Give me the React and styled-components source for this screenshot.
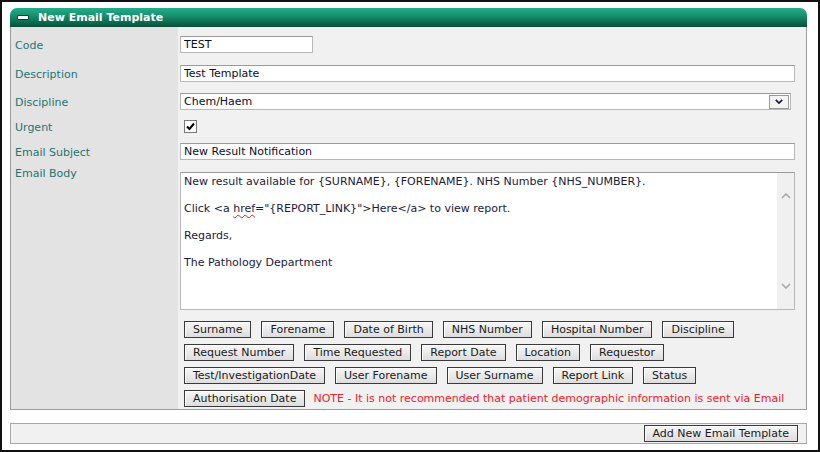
import React from 'react'
import styled, { createGlobalStyle } from 'styled-components'

const GlobalStyle = createGlobalStyle`
  html, body {
    margin: 0;
    padding: 0;
    background: #fff;
  }
  body {
    font-family: "DejaVu Sans", Verdana, sans-serif;
    font-size: 11px;
    color: #111;
  }
`

const Frame = styled.div`
  width: 820px;
  height: 452px;
  box-sizing: border-box;
  border: 2px solid #111;
  padding: 6px 11px 0 8px;
  background: #fff;
`

const Header = styled.div`
  height: 19px;
  display: flex;
  align-items: center;
  gap: 9px;
  padding-left: 7px;
  border-radius: 7px 7px 0 0;
  background: linear-gradient(to bottom, #25ad8a 0%, #179170 40%, #0d6a4e 75%, #0a4f39 100%);
  color: #fff;
  font-weight: bold;
  font-size: 11px;
`

const Minus = styled.span`
  width: 10px;
  height: 3px;
  background: #fff;
  border: 1px solid #0b3d2c;
  border-radius: 1px;
`

const Panel = styled.div`
  border: 1px solid #9c9c9c;
  border-top: none;
  background: #f1f1f1;
`

const Row = styled.div`
  display: grid;
  grid-template-columns: 167px 1fr;
`

const Label = styled.div`
  background: #e3e3e3;
  color: #237572;
  padding: ${(p) => p.$pt + 2}px 0 0 4px;
  line-height: ${(p) => (p.$lh || 17) - 2}px;
`

const Field = styled.div`
  padding: ${(p) => p.$pt}px 10px ${(p) => p.$pb || 0}px 2px;
  display: flex;
  flex-direction: column;
  align-items: flex-start;
`

const TextInput = styled.input`
  box-sizing: border-box;
  width: ${(p) => p.$w}px;
  height: 17px;
  margin: 0;
  padding: 0 3px;
  border: 1px solid #b8b8b8;
  border-top-color: #9a9a9a;
  background: #fff;
  font-family: "DejaVu Sans", Verdana, sans-serif;
  font-size: 11px;
  color: #0d0d2a;
  outline: none;
`

const Select = styled.div`
  box-sizing: border-box;
  width: 611px;
  height: 17px;
  display: flex;
  align-items: center;
  justify-content: space-between;
  padding: 0 1px 0 3px;
  border: 1px solid #b8b8b8;
  border-top-color: #9a9a9a;
  background: #fff;
  color: #0d0d2a;
`

const SelectArrow = styled.span`
  box-sizing: border-box;
  width: 20px;
  height: 14px;
  display: flex;
  align-items: center;
  justify-content: center;
  border: 1px solid #9a9a9a;
  background: #f4f4f4;
`

const Check = styled.span`
  box-sizing: border-box;
  width: 13px;
  height: 13px;
  margin-left: 4px;
  display: flex;
  align-items: center;
  justify-content: center;
  border: 1px solid #7a7a7a;
  background: #fff;
`

const Body = styled.div`
  box-sizing: border-box;
  width: 615px;
  height: 138px;
  display: flex;
  border: 1px solid #b8b8b8;
  border-top-color: #9a9a9a;
  background: #fff;
`

const BodyText = styled.div`
  flex: 1;
  padding: 1px 3px;
  color: #1a1a3c;
  p {
    margin: 0 0 12px;
    line-height: 15px;
  }
`

const Spell = styled.span`
  text-decoration: underline wavy #e02020;
  text-decoration-thickness: 1px;
  text-underline-offset: 2px;
`

const Scrollbar = styled.div`
  width: 17px;
  display: flex;
  flex-direction: column;
  justify-content: space-between;
  align-items: center;
  padding: 20px 0;
  background: #f0f0f0;
`

const Buttons = styled.div`
  display: flex;
  flex-direction: column;
  gap: 6px;
  margin-left: 4px;
`

const ButtonRow = styled.div`
  display: flex;
  align-items: center;
  gap: 10px;
`

const TagButton = styled.button`
  box-sizing: border-box;
  height: 17px;
  margin: 0;
  padding: 0 8px;
  border: 1px solid #3a3a3a;
  border-radius: 0;
  background: linear-gradient(to bottom, #f7f7f7, #dddddd);
  box-shadow: inset 1px 1px 0 #fff;
  font-family: "DejaVu Sans", Verdana, sans-serif;
  font-size: 11px;
  line-height: 15px;
  color: #1a1a1a;
  white-space: nowrap;
`

const Note = styled.span`
  margin-left: -2px;
  color: #f0202a;
`

const Footer = styled.div`
  margin-top: 13px;
  height: 21px;
  box-sizing: border-box;
  display: flex;
  align-items: center;
  justify-content: flex-end;
  padding-right: 8px;
  border: 1px solid #a8a8a8;
  background: #f1f1f1;
`

const tagRows = [
  ['Surname', 'Forename', 'Date of Birth', 'NHS Number', 'Hospital Number', 'Discipline'],
  ['Request Number', 'Time Requested', 'Report Date', 'Location', 'Requestor'],
  ['Test/InvestigationDate', 'User Forename', 'User Surname', 'Report Link', 'Status'],
]

const Chevron = ({ up, color, w = 10, h = 6, sw = 1.6 }) => (
  <svg width={w} height={h} viewBox="0 0 10 6">
    <path d={up ? 'M1 5 L5 1 L9 5' : 'M1 1 L5 5 L9 1'} fill="none" stroke={color} strokeWidth={sw} />
  </svg>
)

export default function App() {
  return (
    <>
      <GlobalStyle />
      <Frame>
        <Header>
          <Minus />
          New Email Template
        </Header>
        <Panel>
          <Row>
            <Label $pt={9}>Code</Label>
            <Field $pt={9}>
              <TextInput $w={133} defaultValue="TEST" readOnly />
            </Field>
          </Row>
          <Row>
            <Label $pt={12}>Description</Label>
            <Field $pt={12}>
              <TextInput $w={615} defaultValue="Test Template" readOnly />
            </Field>
          </Row>
          <Row>
            <Label $pt={11}>Discipline</Label>
            <Field $pt={11}>
              <Select>
                Chem/Haem
                <SelectArrow>
                  <Chevron color="#14143a" w={8} h={5} sw={2} />
                </SelectArrow>
              </Select>
            </Field>
          </Row>
          <Row>
            <Label $pt={10} $lh={13}>Urgent</Label>
            <Field $pt={10}>
              <Check>
                <svg width="11" height="11" viewBox="0 0 11 11">
                  <path d="M2 5.5 L4.5 8 L9 2.5" fill="none" stroke="#000" strokeWidth="2" />
                </svg>
              </Check>
            </Field>
          </Row>
          <Row>
            <Label $pt={10}>Email Subject</Label>
            <Field $pt={10}>
              <TextInput $w={615} defaultValue="New Result Notification" readOnly />
            </Field>
          </Row>
          <Row>
            <Label $pt={4}>Email Body</Label>
            <Field $pt={12}>
              <Body>
                <BodyText>
                  <p>New result available for {'{SURNAME}'}, {'{FORENAME}'}. NHS Number {'{NHS_NUMBER}'}.</p>
                  <p>
                    Click &lt;a <Spell>href</Spell>="{'{REPORT_LINK}'}"&gt;Here&lt;/a&gt; to view report.
                  </p>
                  <p>Regards,</p>
                  <p>The Pathology Department</p>
                </BodyText>
                <Scrollbar>
                  <Chevron up color="#a8a8a8" />
                  <Chevron color="#a8a8a8" />
                </Scrollbar>
              </Body>
            </Field>
          </Row>
          <Row>
            <Label $pt={11} />
            <Field $pt={11} $pb={2}>
              <Buttons>
                {tagRows.map((row) => (
                  <ButtonRow key={row[0]}>
                    {row.map((t) => (
                      <TagButton key={t} type="button">{t}</TagButton>
                    ))}
                  </ButtonRow>
                ))}
                <ButtonRow>
                  <TagButton type="button">Authorisation Date</TagButton>
                  <Note>NOTE - It is not recommended that patient demographic information is sent via Email</Note>
                </ButtonRow>
              </Buttons>
            </Field>
          </Row>
        </Panel>
        <Footer>
          <TagButton type="button">Add New Email Template</TagButton>
        </Footer>
      </Frame>
    </>
  )
}
